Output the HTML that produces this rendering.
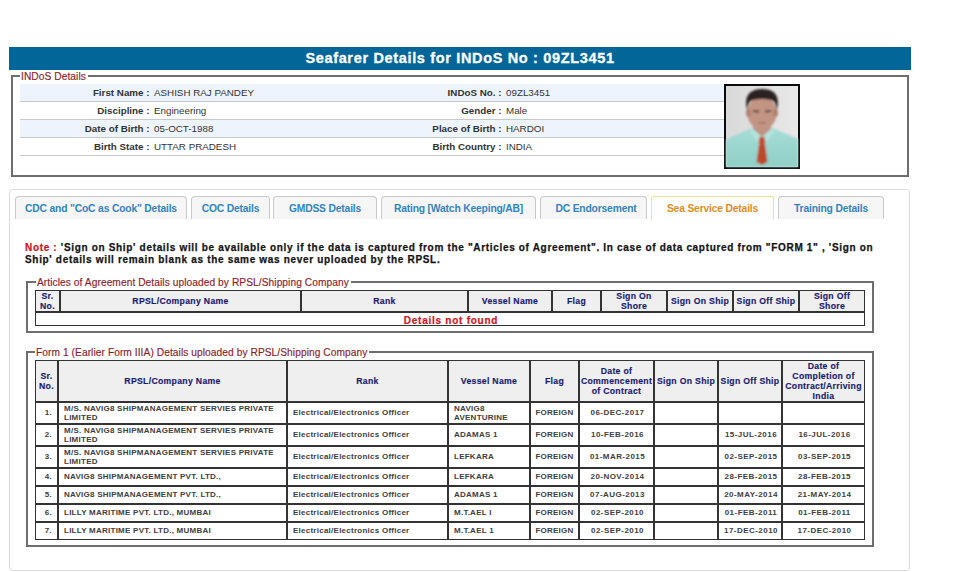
<!DOCTYPE html>
<html>
<head>
<meta charset="utf-8">
<style>
html,body{margin:0;padding:0;background:#fff;}
body{width:972px;height:572px;position:relative;overflow:hidden;font-family:"Liberation Sans",sans-serif;color:#333;}
.abs{position:absolute;}
#bar{left:9px;top:47px;width:902px;height:23px;background:#026699;color:#fff;-webkit-text-stroke:0.3px #fff;font-weight:bold;font-size:14.5px;letter-spacing:0.66px;line-height:23px;text-align:center;}
.fs{position:absolute;border:2px solid #6e6e6e;box-sizing:border-box;}
.lg{position:absolute;-webkit-text-stroke:0.15px #8c1d2c;background:linear-gradient(transparent 3px,#fff 3px);color:#8c1d2c;font-size:10.2px;letter-spacing:0.07px;line-height:12px;padding:0 2px 0 1px;white-space:nowrap;}
.row{position:absolute;left:20px;width:704px;height:17px;border-bottom:1px solid #c9c9c9;font-size:9.8px;line-height:18px;}
.row.alt{background:#eef4fc;}
.row span{position:absolute;white-space:nowrap;top:0;}
.row .l{font-weight:bold;text-align:right;}
.row .v{}
#tabs{left:9px;top:189px;width:901px;height:382px;border:1px solid #dcdcdc;border-radius:4px;box-sizing:border-box;}
.tab{position:absolute;top:196px;height:23px;box-sizing:border-box;border:1px solid #c9c9c9;border-bottom:none;border-radius:4px 4px 0 0;background:#f6f6f6;color:#3583bc;font-size:10.3px;letter-spacing:-0.17px;font-weight:bold;line-height:23px;text-align:center;white-space:nowrap;}
.tab.act{background:#fff;border-color:#efe09a;color:#dc8d2a;height:24px;border-radius:3px 3px 0 0;}
#note{left:25px;top:242px;-webkit-text-stroke:0.25px #141414;width:880px;font-size:10px;font-weight:bold;letter-spacing:0.675px;line-height:12px;color:#141414;white-space:nowrap;}
#note b{color:#d0121e;-webkit-text-stroke:0.2px #d0121e;}
table.g{position:absolute;border-collapse:separate;border-spacing:0;table-layout:fixed;}
table.g td{border:1px solid #333;padding:0;box-sizing:border-box;text-align:center;vertical-align:middle;overflow:hidden;}
table.g tr.h td{background:#efefef;color:#1b1b70;-webkit-text-stroke:0.15px #1b1b70;font-weight:bold;font-size:8.7px;letter-spacing:0.3px;line-height:10px;}
table.g tr.d td{font-weight:bold;font-size:8px;letter-spacing:0.25px;line-height:9px;color:#404040;padding-bottom:2px;}
table.g tr.d td.t{text-align:left;padding-left:5px;padding-bottom:2px;}
table.g tr.nf td{color:#d3131d;-webkit-text-stroke:0.2px #d3131d;font-weight:bold;font-size:10px;letter-spacing:0.75px;line-height:8px;padding-top:4px;padding-left:2px;}
table.g tr.d td.dt{letter-spacing:0.45px;padding-left:2px;}
table.g tr.d td.two{padding-bottom:0;}
table.g tr.d td.n{text-align:right;padding-right:5px;padding-bottom:2px;}
</style>
</head>
<body>
<div id="bar" class="abs">Seafarer Details for INDoS No : 09ZL3451</div>

<!-- INDoS fieldset -->
<div class="fs" style="left:11px;top:75px;width:898px;height:102px;"></div>
<div class="lg" style="left:20px;top:71px;">INDoS Details</div>
<div class="row alt" style="top:84px;"><span class="l" style="right:574.5px;">First Name :</span><span class="v" style="left:134px;">ASHISH RAJ PANDEY</span><span class="l" style="right:222.5px;">INDoS No. :</span><span class="v" style="left:486px;">09ZL3451</span></div>
<div class="row" style="top:102px;"><span class="l" style="right:574.5px;">Discipline :</span><span class="v" style="left:134px;">Engineering</span><span class="l" style="right:222.5px;">Gender :</span><span class="v" style="left:486px;">Male</span></div>
<div class="row alt" style="top:120px;"><span class="l" style="right:574.5px;">Date of Birth :</span><span class="v" style="left:134px;">05-OCT-1988</span><span class="l" style="right:222.5px;">Place of Birth :</span><span class="v" style="left:486px;">HARDOI</span></div>
<div class="row" style="top:138px;"><span class="l" style="right:574.5px;">Birth State :</span><span class="v" style="left:134px;">UTTAR PRADESH</span><span class="l" style="right:222.5px;">Birth Country :</span><span class="v" style="left:486px;">INDIA</span></div>

<!-- photo -->
<svg class="abs" style="left:724px;top:84px;" width="76" height="85" viewBox="0 0 76 85">
<defs>
<linearGradient id="bg" x1="0" y1="0" x2="1" y2="0"><stop offset="0" stop-color="#d9d9d9"/><stop offset="1" stop-color="#e8e8e8"/></linearGradient>
<linearGradient id="sh" x1="0" y1="0" x2="0" y2="1"><stop offset="0" stop-color="#a6ddd6"/><stop offset="1" stop-color="#8fcfc6"/></linearGradient>
<filter id="bl" x="-5%" y="-5%" width="110%" height="110%"><feGaussianBlur stdDeviation="0.9"/></filter>
</defs>
<rect x="0" y="0" width="76" height="85" fill="#0a0a0a"/>
<rect x="2" y="2" width="72" height="81" fill="url(#bg)"/>
<g filter="url(#bl)">
<path d="M2 56 C10 51 20 48 27 44 L38 52 L49 44 C56 48 66 51 74 55 L74 83 L2 83 Z" fill="url(#sh)"/>
<path d="M29 38 L29 48 L38 55 L47 48 L47 38 Z" fill="#bf9383"/>
<ellipse cx="38" cy="29" rx="14.5" ry="17" fill="#c29484"/>
<ellipse cx="24.5" cy="29" rx="2.5" ry="4" fill="#b58070"/>
<ellipse cx="51.5" cy="29" rx="2.5" ry="4" fill="#b58070"/>
<path d="M23.5 27 C19 12 26 5 38 5 C50 5 57 11 52.5 27 C52 20 51 17 47 16 C41 14.5 35 14.5 29 16 C25 17 24 20 23.5 27 Z" fill="#2a2422"/>
<path d="M29 27 L35 27.5 M41 27.5 L47 27" stroke="#5a3f38" stroke-width="1.8"/>
<path d="M34 39 L42 39" stroke="#956a5e" stroke-width="1.2"/>
<path d="M28 44 L38 53 L35 60 L26 48 Z M48 44 L38 53 L41 60 L50 48 Z" fill="#b3e3dc"/>
<path d="M35.5 53 L40.5 53 L41.5 59 L38 61 L34.5 59 Z" fill="#bf4f2e"/>
<path d="M35 60 L41 60 L43.5 78 L38 81 L32.5 78 Z" fill="#bb4a2a"/>
</g>
</svg>

<!-- tabs -->
<div id="tabs" class="abs"></div>
<div class="tab" style="left:15px;width:172px;">CDC and "CoC as Cook" Details</div>
<div class="tab" style="left:191px;width:79px;">COC Details</div>
<div class="tab" style="left:273px;width:104px;">GMDSS Details</div>
<div class="tab" style="left:381px;width:155px;">Rating [Watch Keeping/AB]</div>
<div class="tab" style="left:540px;width:107px;padding-left:5px;">DC Endorsement</div>
<div class="tab act" style="left:651px;width:123px;">Sea Service Details</div>
<div class="tab" style="left:778px;width:106px;">Training Details</div>

<div id="note" class="abs"><b>Note : </b>'Sign on Ship' details will be available only if the data is captured from the "Articles of Agreement". In case of data captured from "FORM 1" , 'Sign on<br>Ship' details will remain blank as the same was never uploaded by the RPSL.</div>

<div class="fs" style="left:26px;top:281px;width:848px;height:52px;"></div>
<div class="lg" style="left:36px;top:276.5px;">Articles of Agreement Details uploaded by RPSL/Shipping Company</div>
<table class="g" style="left:35px;top:290px;width:830px;">
<tr class="h"><td  style="width:25px;height:22px;">Sr.<br>No.</td><td  style="width:241px;height:22px;">RPSL/Company Name</td><td  style="width:167px;height:22px;">Rank</td><td  style="width:84px;height:22px;">Vessel Name</td><td  style="width:49px;height:22px;">Flag</td><td  style="width:66px;height:22px;">Sign On<br>Shore</td><td  style="width:66px;height:22px;">Sign On Ship</td><td  style="width:66px;height:22px;">Sign Off Ship</td><td  style="width:66px;height:22px;">Sign Off<br>Shore</td></tr>
<tr class="nf"><td colspan="9" style="height:14px;">Details not found</td></tr>
</table>
<div class="fs" style="left:26px;top:351px;width:848px;height:196px;"></div>
<div class="lg" style="left:35px;top:346.5px;">Form 1 (Earlier Form IIIA) Details uploaded by RPSL/Shipping Company</div>
<table class="g" style="left:35px;top:360px;width:830px;">
<tr class="h"><td  style="width:23px;height:42px;">Sr.<br>No.</td><td  style="width:229px;height:42px;">RPSL/Company Name</td><td  style="width:161px;height:42px;">Rank</td><td  style="width:82px;height:42px;">Vessel Name</td><td  style="width:49px;height:42px;">Flag</td><td  style="width:75px;height:42px;">Date of<br>Commencement<br>of Contract</td><td  style="width:64px;height:42px;">Sign On Ship</td><td  style="width:64px;height:42px;">Sign Off Ship</td><td  style="width:83px;height:42px;">Date of<br>Completion of<br>Contract/Arriving<br>India</td></tr>
<tr class="d"><td class="n" style="height:22px;">1.</td><td class="t two" style="height:22px;">M/S. NAVIG8 SHIPMANAGEMENT SERVIES PRIVATE<br>LIMITED</td><td class="t" style="height:22px;">Electrical/Electronics Officer</td><td class="t two" style="height:22px;">NAVIG8<br>AVENTURINE</td><td  style="height:22px;">FOREIGN</td><td class="dt" style="height:22px;">06-DEC-2017</td><td  style="height:22px;"></td><td  style="height:22px;"></td><td  style="height:22px;"></td></tr>
<tr class="d"><td class="n" style="height:22px;">2.</td><td class="t two" style="height:22px;">M/S. NAVIG8 SHIPMANAGEMENT SERVIES PRIVATE<br>LIMITED</td><td class="t" style="height:22px;">Electrical/Electronics Officer</td><td class="t" style="height:22px;">ADAMAS 1</td><td  style="height:22px;">FOREIGN</td><td class="dt" style="height:22px;">10-FEB-2016</td><td  style="height:22px;"></td><td class="dt" style="height:22px;">15-JUL-2016</td><td class="dt" style="height:22px;">16-JUL-2016</td></tr>
<tr class="d"><td class="n" style="height:22px;">3.</td><td class="t two" style="height:22px;">M/S. NAVIG8 SHIPMANAGEMENT SERVIES PRIVATE<br>LIMITED</td><td class="t" style="height:22px;">Electrical/Electronics Officer</td><td class="t" style="height:22px;">LEFKARA</td><td  style="height:22px;">FOREIGN</td><td class="dt" style="height:22px;">01-MAR-2015</td><td  style="height:22px;"></td><td class="dt" style="height:22px;">02-SEP-2015</td><td class="dt" style="height:22px;">03-SEP-2015</td></tr>
<tr class="d"><td class="n" style="height:18px;">4.</td><td class="t" style="height:18px;">NAVIG8 SHIPMANAGEMENT PVT. LTD.,</td><td class="t" style="height:18px;">Electrical/Electronics Officer</td><td class="t" style="height:18px;">LEFKARA</td><td  style="height:18px;">FOREIGN</td><td class="dt" style="height:18px;">20-NOV-2014</td><td  style="height:18px;"></td><td class="dt" style="height:18px;">28-FEB-2015</td><td class="dt" style="height:18px;">28-FEB-2015</td></tr>
<tr class="d"><td class="n" style="height:18px;">5.</td><td class="t" style="height:18px;">NAVIG8 SHIPMANAGEMENT PVT. LTD.,</td><td class="t" style="height:18px;">Electrical/Electronics Officer</td><td class="t" style="height:18px;">ADAMAS 1</td><td  style="height:18px;">FOREIGN</td><td class="dt" style="height:18px;">07-AUG-2013</td><td  style="height:18px;"></td><td class="dt" style="height:18px;">20-MAY-2014</td><td class="dt" style="height:18px;">21-MAY-2014</td></tr>
<tr class="d"><td class="n" style="height:18px;">6.</td><td class="t" style="height:18px;">LILLY MARITIME PVT. LTD., MUMBAI</td><td class="t" style="height:18px;">Electrical/Electronics Officer</td><td class="t" style="height:18px;">M.T.AEL I</td><td  style="height:18px;">FOREIGN</td><td class="dt" style="height:18px;">02-SEP-2010</td><td  style="height:18px;"></td><td class="dt" style="height:18px;">01-FEB-2011</td><td class="dt" style="height:18px;">01-FEB-2011</td></tr>
<tr class="d"><td class="n" style="height:18px;">7.</td><td class="t" style="height:18px;">LILLY MARITIME PVT. LTD., MUMBAI</td><td class="t" style="height:18px;">Electrical/Electronics Officer</td><td class="t" style="height:18px;">M.T.AEL 1</td><td  style="height:18px;">FOREIGN</td><td class="dt" style="height:18px;">02-SEP-2010</td><td  style="height:18px;"></td><td class="dt" style="height:18px;">17-DEC-2010</td><td class="dt" style="height:18px;">17-DEC-2010</td></tr>
</table>
</body>
</html>
